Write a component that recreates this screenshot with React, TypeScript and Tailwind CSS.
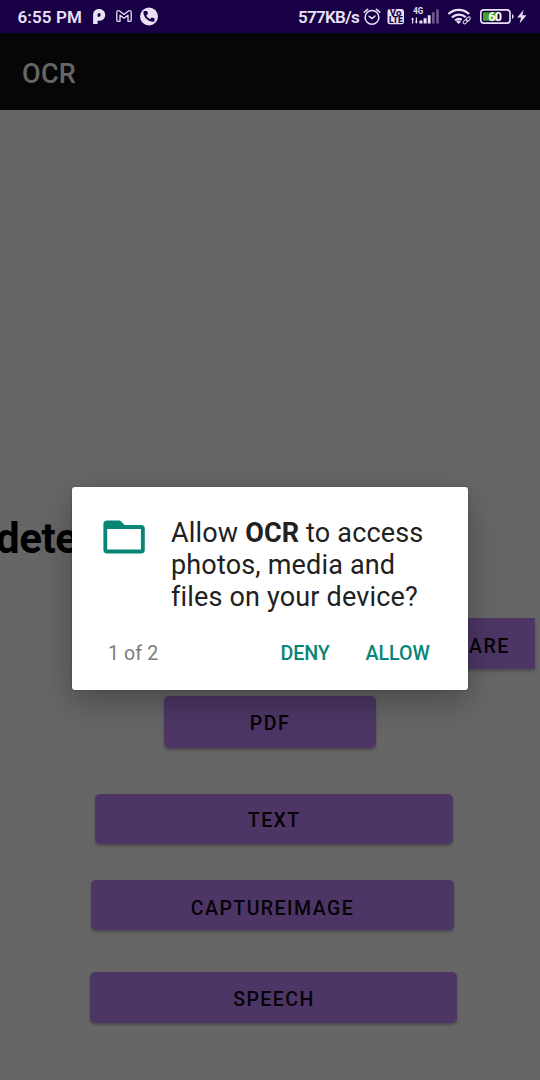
import type { ReactNode } from "react";

const ink = "#e9e2f6";

function Glyph({ box, className, children }: { box: string; className: string; children: ReactNode }) {
  return (
    <svg viewBox={box} className={`shrink-0 ${className}`} fill="none">
      {children}
    </svg>
  );
}

function StatusBar() {
  return (
    <div className="flex h-[33px] shrink-0 items-start bg-[#190046] text-[#e9e2f6]">
      <span className="ml-[17.5px] w-[65.5px] text-[17px] leading-[34px] font-semibold tracking-[0.1px] whitespace-nowrap">6:55 PM</span>
      <Glyph box="92 0 14 33" className="ml-[9px] h-[33px] w-[14px]">
        <path
          fill={ink}
          fillRule="evenodd"
          d="M93.1 15.2C93.1 11.5 95.4 9.1 99 9.1S105.2 11.6 105.2 15S102.8 20.8 99.6 20.8H97.6V24H93.1ZM97.6 16.8V15.2C97.6 13.8 98.2 13.1 99.1 13.1S100.6 13.9 100.6 15S100 16.8 99 16.8Z"
        />
      </Glyph>
      <Glyph box="115 0 18 33" className="ml-[9px] h-[33px] w-[18px]">
        <path
          stroke={ink}
          strokeWidth="1.3"
          strokeLinejoin="round"
          d="M116.8 12.3C116.8 10.7 118.5 10.2 119.6 11.1L124 14.4L128.4 11.1C129.5 10.2 131.2 10.7 131.2 12.3V20.3Q131.2 21.4 130.2 21.4H128V15.2L124 18.2L120 15.2V21.4H117.8Q116.8 21.4 116.8 20.3Z"
        />
      </Glyph>
      <Glyph box="139 0 20 33" className="ml-[6px] h-[33px] w-[20px]">
        <circle cx="149" cy="16.5" r="9" fill={ink} />
        <path
          fill="#190046"
          d="M143.4 12.1C143.4 11.4 143.9 10.9 144.6 10.9H146.6C147.1 10.9 147.4 11.2 147.5 11.7L147.8 13.5C147.9 13.9 147.7 14.3 147.4 14.6L146.3 15.6C147.2 17.2 148.4 18.4 150 19.2L151 18C151.3 17.7 151.6 17.6 152 17.7L153.8 18C154.3 18.1 154.6 18.4 154.6 18.9V20.6C154.6 21.3 154.1 21.8 153.4 21.8C147.9 21.7 143.5 17.5 143.4 12.1Z"
        />
      </Glyph>
      <span className="ml-[139px] w-[63px] text-[17px] leading-[34px] font-semibold tracking-[-0.7px] whitespace-nowrap">577KB/s</span>
      <Glyph box="362 0 20 33" className="ml-px h-[33px] w-[20px]">
        <g stroke={ink} strokeWidth="1.5" strokeLinecap="round">
          <circle cx="372" cy="17.3" r="6.9" />
          <path d="M364.2 12.1L367.6 9.3M379.8 12.1L376.4 9.3M369.2 16.3L372 18.6L375 16" />
        </g>
      </Glyph>
      <svg viewBox="386 0 20 33" className="ml-[4px] h-[33px] w-[20px] shrink-0">
        <rect x="387.5" y="9" width="16.5" height="15.3" rx="2.5" fill={ink} />
        <g fill="#190046" fontFamily="Roboto, sans-serif" fontWeight="800">
          <text x="389.8" y="16.2" fontSize="9" textLength="11.6" lengthAdjust="spacingAndGlyphs">Vo</text>
          <text x="388.9" y="23.4" fontSize="8.8" textLength="14" lengthAdjust="spacingAndGlyphs">LTE</text>
        </g>
      </svg>
      <svg viewBox="410 0 31 33" className="ml-[4px] h-[33px] w-[31px] shrink-0" fill={ink}>
        <text x="413.3" y="14.2" fontSize="8.6" fontWeight="700" textLength="10" lengthAdjust="spacingAndGlyphs" fontFamily="Roboto, sans-serif">4G</text>
        <path d="M412.6 17.4L414.2 19.6H413.2V23.5H412V19.6H411ZM416.4 23.7L414.8 21.5H415.8V17.6H417V21.5H418Z" />
        <path d="M419.4 20.5H422.4V23.5H419.4ZM423.6 18.2H426.6V23.5H423.6ZM427.8 15.2H430.6V23.5H427.8Z" />
        <path opacity=".4" d="M432 12.2H434.6V23.5H432ZM436.2 9.4H438.8V23.5H436.2Z" />
      </svg>
      <Glyph box="447 0 25 33" className="ml-[6px] h-[33px] w-[25px]">
        <g stroke={ink} strokeWidth="2.2">
          <path d="M448.4 14C454.5 8.4 463 8.4 469.2 14" />
          <path d="M451.9 17.3C456 13.7 461.6 13.7 465.7 17.1" />
          <path d="M455.1 20.4C457.5 18.5 459.9 18.5 461.7 19.8" />
        </g>
        <path d="M456.1 21.4Q458.6 19.8 461 21.4L458.5 24Z" fill={ink} />
        <g stroke={ink} strokeWidth="1" transform="rotate(-43 466.7 20.3)">
          <rect x="462.3" y="18.9" width="4.8" height="3" rx="1.5" />
          <rect x="466.2" y="18.9" width="4.8" height="3" rx="1.5" />
        </g>
      </Glyph>
      <svg viewBox="478 0 36 33" className="ml-[6px] h-[33px] w-[36px] shrink-0">
        <rect x="480.8" y="9.9" width="29.2" height="13.2" rx="3.2" fill="none" stroke={ink} strokeWidth="1.6" />
        <rect x="483" y="12.2" width="14.6" height="8.6" rx="1" fill="#44a526" />
        <path d="M512 14.2Q513.6 14.3 513.6 16.5T512 18.8Z" fill={ink} />
        <text x="494.8" y="20.9" textAnchor="middle" fontSize="12.5" fontWeight="700" fontFamily="Roboto, sans-serif" letterSpacing="-0.6" fill="#fff">60</text>
      </svg>
      <Glyph box="516 0 12 33" className="ml-[2px] h-[33px] w-[12px]">
        <path d="M523.7 9.7L517.2 17.5H521.1L519.6 23.5L526.5 15.2H522.3Z" fill={ink} />
      </Glyph>
    </div>
  );
}

function ActionButton({ label, className }: { label: string; className: string }) {
  return (
    <button
      className={`flex shrink-0 items-center justify-center bg-[#4d3665] pl-px text-[19.5px] leading-none font-medium tracking-[1.45px] text-[#050208] shadow-[0_2px_3px_rgba(0,0,0,0.26)] ${className}`}
    >
      {label}
    </button>
  );
}

function PermissionDialog() {
  return (
    <div
      role="dialog"
      className="absolute top-[487.4px] left-[72px] flex h-[203px] w-[396px] flex-col rounded-[3px] bg-white shadow-[0_12px_32px_rgba(0,0,0,0.28),0_0_2px_rgba(0,0,0,0.3)]"
    >
      <div className="flex pt-[29.6px] pl-[31px]">
        <svg viewBox="0 0 42 34" className="mt-[3px] h-[34px] w-[42px] shrink-0" fill="#078675">
          <path
            fillRule="evenodd"
            d="M4.2 .6H15.7Q17.2 .6 18.2 1.6L21.6 5H38.2Q41.8 5 41.8 8.6V29.8Q41.8 33.5 38.2 33.5H4.2Q.4 33.5 .4 29.8V4.3Q.4 .6 4.2 .6ZM4.2 9.1V29.6H37.9V9.1Z"
          />
        </svg>
        <p className="ml-[26px] text-[27px] leading-[32px] tracking-[0.17px] whitespace-nowrap text-[#212121]">
          Allow <b className="font-bold">OCR</b> to access
          <br />
          photos, media and
          <br />
          files on your device?
        </p>
      </div>
      <div className="mt-[27px] flex items-center text-[19.7px] leading-[28px] whitespace-nowrap">
        <span className="ml-[36px] w-[172.5px] text-[19.5px] tracking-[0.15px] text-[#7b7b7b]">1 of 2</span>
        <button className="w-[85px] text-left font-medium tracking-[-0.15px] text-[#078675]">DENY</button>
        <button className="font-medium tracking-[-0.05px] text-[#078675]">ALLOW</button>
      </div>
    </div>
  );
}

export default function App() {
  return (
    <div className="relative flex h-[1080px] w-[540px] flex-col overflow-hidden bg-[#666666] font-['Roboto',sans-serif]">
      <StatusBar />
      <header className="flex h-[77px] shrink-0 items-center bg-[#060606] pt-[5px] pl-[22px] text-[27px] font-medium tracking-[0.3px] text-[#666666]">
        OCR
      </header>
      <main className="flex flex-col pt-[404px]">
        <h1 className="-ml-[4px] h-[50px] text-[42px] leading-[50px] font-bold tracking-[-0.4px] text-black">dete</h1>
        <ActionButton label="SHARE" className="mt-[54px] mr-[5.5px] h-[51px] w-[116px] self-end pt-[6px] pr-[4px]" />
        <ActionButton label="PDF" className="mt-[27px] ml-[163.5px] h-[52px] w-[212px] rounded-[5px] pt-[3px]" />
        <ActionButton label="TEXT" className="mt-[46px] ml-[95px] h-[50px] w-[357.5px] rounded-[5px] pt-[3px]" />
        <ActionButton label="CAPTUREIMAGE" className="mt-[36px] ml-[90.5px] h-[50px] w-[363px] rounded-[5px] pt-[8px]" />
        <ActionButton label="SPEECH" className="mt-[42px] ml-[90px] h-[51px] w-[367px] rounded-[5px] pt-[4px]" />
      </main>
      <PermissionDialog />
    </div>
  );
}
